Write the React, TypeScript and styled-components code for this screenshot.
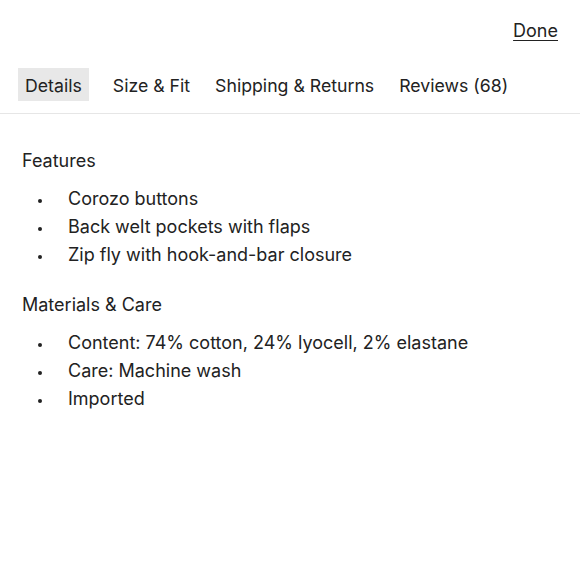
import React, { useState } from 'react';
import styled, { createGlobalStyle } from 'styled-components';

const GlobalStyle = createGlobalStyle`
  html, body {
    margin: 0;
    padding: 0;
    background: #fff;
  }
  body {
    font-family: 'Inter', 'Noto Sans', sans-serif;
    color: #222;
  }
`;

const Page = styled.div`
  width: 580px;
  height: 580px;
  display: flex;
  flex-direction: column;
`;

const TopBar = styled.div`
  display: flex;
  justify-content: flex-end;
  padding: 20px 22px 0 0;
  height: 50px;
  box-sizing: border-box;
`;

const DoneLink = styled.a`
  font-size: 18px;
  color: #222;
  text-decoration: underline;
  text-underline-offset: 3px;
  cursor: pointer;
`;

const Tabs = styled.div`
  display: flex;
  align-items: center;
  gap: 13px;
  padding: 18px 18px 12px;
  border-bottom: 1px solid #e6e6e6;
`;

const Tab = styled.button<{ $active?: boolean }>`
  font-family: inherit;
  font-size: 17.7px;
  color: #222;
  border: none;
  background: ${(p) => (p.$active ? '#e8e8e8' : 'transparent')};
  padding: 1px 6px 0;
  height: 33px;
  cursor: pointer;

  &:first-child {
    padding: 1px 7px 0;
    margin-right: 5px;
  }
`;

const Content = styled.div`
  padding: 36px 22px 0;
`;

const Heading = styled.h3`
  margin: 0;
  font-size: 18px;
  font-weight: 400;
  line-height: 22px;
`;

const List = styled.ul`
  list-style: none;
  margin: 13px 0 25px;
  padding: 0;
`;

const Item = styled.li`
  display: flex;
  align-items: center;
  font-size: 18px;
  line-height: 28px;

  &::before {
    content: '';
    width: 4px;
    height: 4px;
    border-radius: 50%;
    background: #222;
    margin: 4px 26px 0 16px;
  }
`;

const sections = [
  {
    title: 'Features',
    items: ['Corozo buttons', 'Back welt pockets with flaps', 'Zip fly with hook-and-bar closure'],
  },
  {
    title: 'Materials & Care',
    items: ['Content: 74% cotton, 24% lyocell, 2% elastane', 'Care: Machine wash', 'Imported'],
  },
];

const tabs = ['Details', 'Size & Fit', 'Shipping & Returns', 'Reviews (68)'];

export default function App() {
  const [active, setActive] = useState(0);
  return (
    <>
      <GlobalStyle />
      <Page>
        <TopBar>
          <DoneLink>Done</DoneLink>
        </TopBar>
        <Tabs>
          {tabs.map((t, i) => (
            <Tab key={t} $active={i === active} onClick={() => setActive(i)}>
              {t}
            </Tab>
          ))}
        </Tabs>
        <Content>
          {sections.map((s) => (
            <div key={s.title}>
              <Heading>{s.title}</Heading>
              <List>
                {s.items.map((it) => (
                  <Item key={it}>{it}</Item>
                ))}
              </List>
            </div>
          ))}
        </Content>
      </Page>
    </>
  );
}
